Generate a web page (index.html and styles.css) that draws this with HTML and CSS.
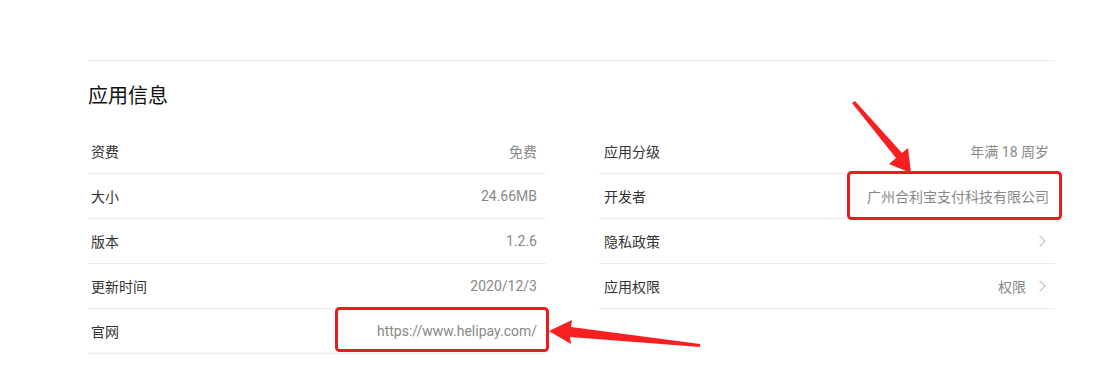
FILE: index.html
```html
<!DOCTYPE html>
<html lang="zh-CN">
<head>
    <meta charset="UTF-8">
    <meta name="viewport" content="width=device-width, initial-scale=1.0">
    <title>应用信息</title>
    <link rel="stylesheet" href="styles.css">
</head>
<body>
    <section class="info">
        <h2 class="info-title">应用信息</h2>
        <div class="info-grid">
            <div class="col">
                <div class="row"><span class="label">资费</span><span class="value">免费</span></div>
                <div class="row"><span class="label">大小</span><span class="value">24.66MB</span></div>
                <div class="row"><span class="label">版本</span><span class="value">1.2.6</span></div>
                <div class="row"><span class="label">更新时间</span><span class="value">2020/12/3</span></div>
                <div class="row"><span class="label">官网</span><span class="value">https://www.helipay.com/</span></div>
            </div>
            <div class="col col-right">
                <div class="row"><span class="label">应用分级</span><span class="value">年满 18 周岁</span></div>
                <div class="row"><span class="label">开发者</span><span class="value">广州合利宝支付科技有限公司</span></div>
                <div class="row link"><span class="label">隐私政策</span><span class="value"><span class="chev"></span></span></div>
                <div class="row link"><span class="label">应用权限</span><span class="value">权限<span class="chev"></span></span></div>
            </div>
        </div>
    </section>

    <svg class="marks" width="1119" height="377" viewBox="0 0 1119 377">
        <rect x="848.5" y="172.5" width="212" height="46" rx="3" fill="none" stroke="#f0191d" stroke-width="3"/>
        <rect x="336.5" y="308.5" width="211" height="42" rx="3" fill="none" stroke="#f0191d" stroke-width="3"/>
        <polygon points="852,103 855,101 902,153 908,148 911,173 889,164 896,158" fill="#f5201f"/>
        <polygon points="700,344 700,347 570,337 571,344 549,331 572,320 571,327" fill="#f5201f"/>
    </svg>
</body>
</html>
```

FILE: styles.css
```css
* {
    margin: 0;
    padding: 0;
    box-sizing: border-box;
}

body {
    background-color: #fff;
    font: normal 14px Roboto, "Noto Sans CJK SC", sans-serif;
    color: #333;
}

.info {
    margin: 0 64px 0 88px;
    padding-top: 60px;
}

.info-title {
    border-top: 1px solid #ebebeb;
    font-size: 20px;
    font-weight: normal;
    color: #111;
    line-height: 28px;
    padding: 21px 0 19px;
}

.info-grid {
    display: grid;
    grid-template-columns: 458px 456px;
    column-gap: 53px;
}

.row {
    display: flex;
    justify-content: space-between;
    align-items: center;
    height: 45px;
    border-bottom: 1px solid #ebebeb;
    padding: 0 9px 0 3px;
}

.col-right .row {
    padding: 0 6px 0 5px;
}

.col-right .row.link {
    padding-right: 11px;
}

.label {
    color: #333;
}

.value {
    color: #888;
    display: flex;
    align-items: center;
}

.chev {
    display: inline-block;
    width: 8px;
    height: 8px;
    border-top: 1px solid #bbb;
    border-right: 1px solid #bbb;
    transform: rotate(45deg);
    margin-left: 10px;
}

.marks {
    position: absolute;
    left: 0;
    top: 0;
}
```
